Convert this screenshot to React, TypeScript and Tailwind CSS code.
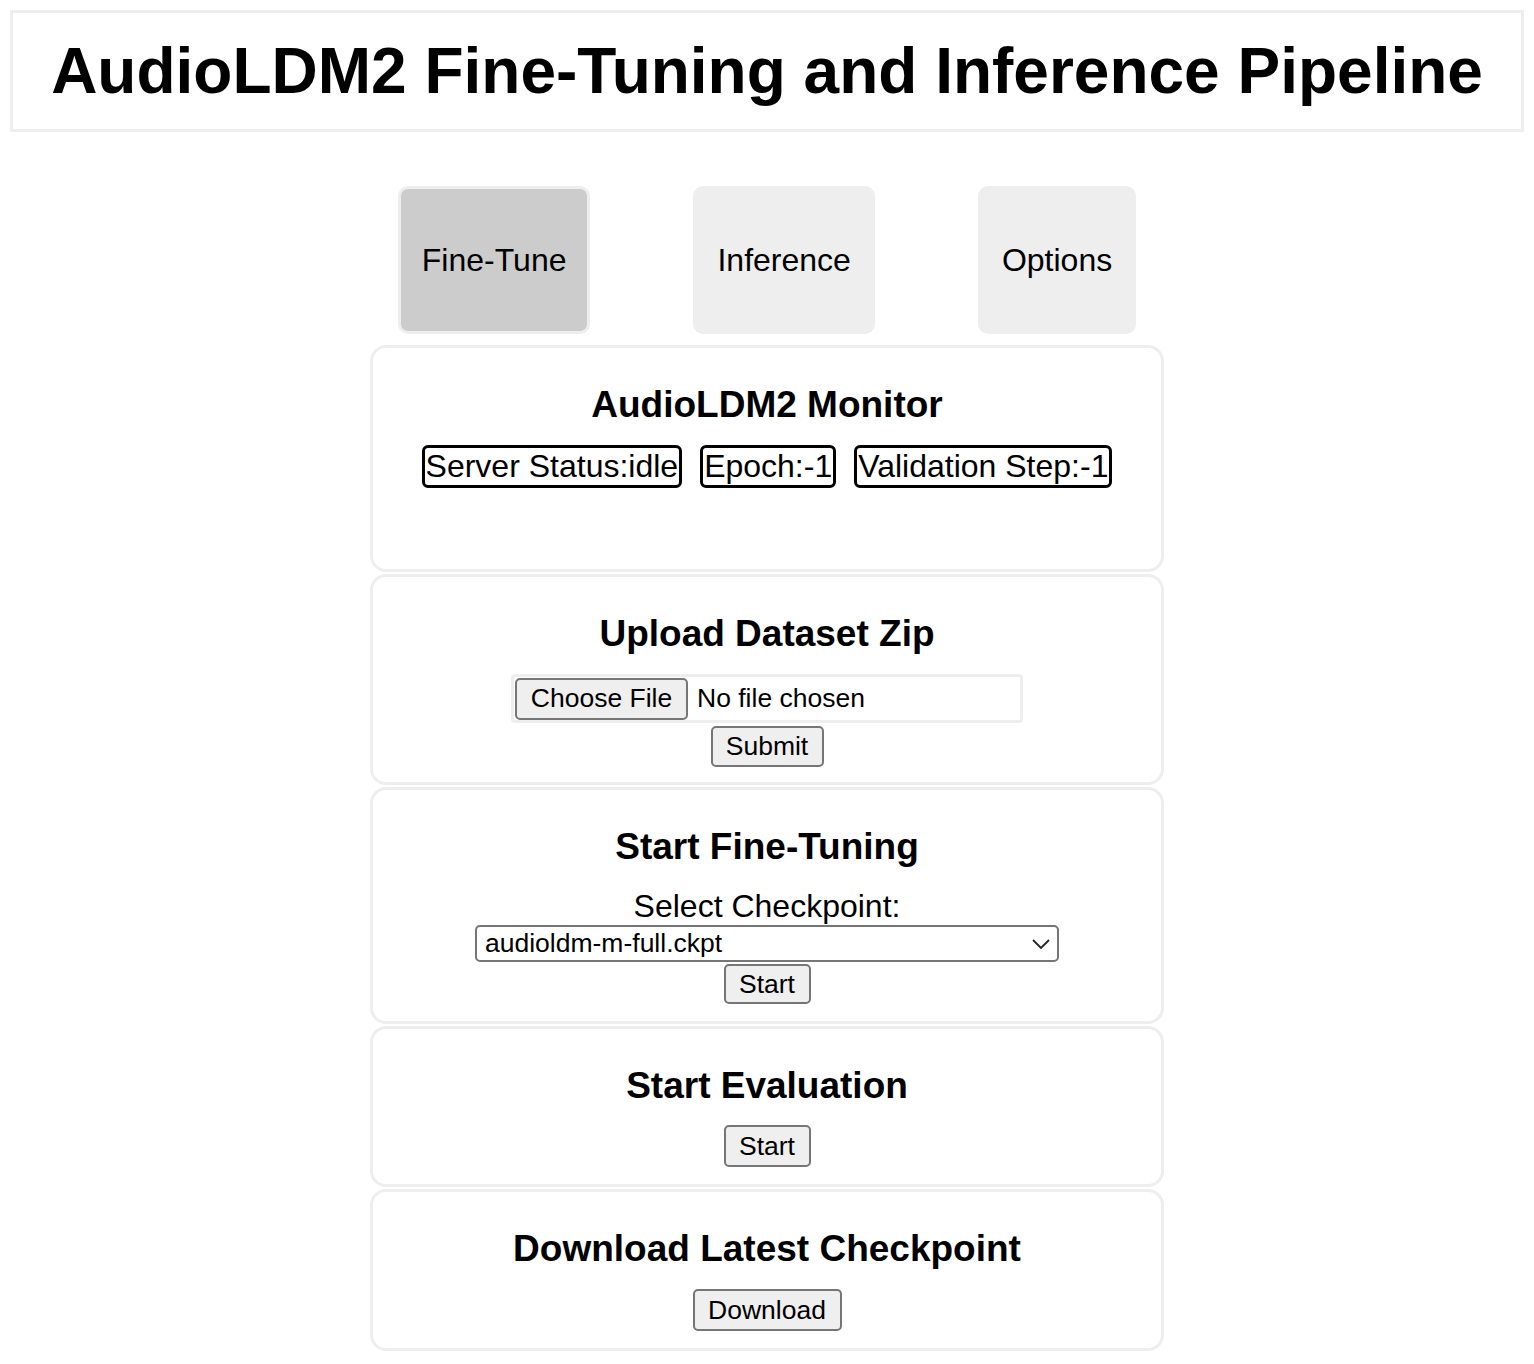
import React from 'react';

const btn =
  'flex items-center justify-center bg-[#efefef] border-2 border-[#767676] rounded-[5px] text-[26.5px] leading-none text-black';

const Card: React.FC<{ title: string; className?: string; children?: React.ReactNode }> = ({
  title,
  className,
  children,
}) => (
  <div className={`flex flex-col items-center border-[3px] border-[#eee] rounded-[16px] pt-[35px] ${className ?? ''}`}>
    <h3 className="text-[37px] leading-[43px] font-bold">{title}</h3>
    {children}
  </div>
);

const App: React.FC = () => {
  return (
    <div className="min-h-[1364px] bg-white text-black font-['Liberation_Sans',Arial,sans-serif] pt-[10px]">
      {/* header */}
      <div className="mx-[10px] h-[122px] border-[3px] border-[#eee] flex items-center justify-center">
        <h1 className="text-[64px] leading-none font-bold">AudioLDM2 Fine-Tuning and Inference Pipeline</h1>
      </div>

      {/* tabs */}
      <div className="mt-[54px] flex justify-center gap-[103px]">
        <button className="h-[148px] px-[21px] text-[32px] rounded-[10px] border-[3px] border-[#eee] bg-[#ccc]">
          Fine-Tune
        </button>
        <button className="h-[148px] px-[21px] text-[32px] rounded-[10px] border-[3px] border-[#eee] bg-[#eee]">
          Inference
        </button>
        <button className="h-[148px] px-[21px] text-[32px] rounded-[10px] border-[3px] border-[#eee] bg-[#eee]">
          Options
        </button>
      </div>

      <div className="mt-[11px] w-[794px] mx-auto flex flex-col gap-[2px]">
        <Card title="AudioLDM2 Monitor" className="pb-[81px]">
          <div className="mt-[19px] flex gap-[18px] text-[32px] leading-[37px]">
            <span className="border-[3px] border-black rounded-[6px] px-[1px]">Server Status:idle</span>
            <span className="border-[3px] border-black rounded-[6px] px-[1px]">Epoch:-1</span>
            <span className="border-[3px] border-black rounded-[6px] px-[1px]">Validation Step:-1</span>
          </div>
        </Card>

        <Card title="Upload Dataset Zip" className="pb-[15px]">
          <div className="mt-[19px] w-[512px] h-[49px] border-[3px] border-[#eee] rounded-[4px] flex items-center pl-[1px]">
            <button className={`${btn} h-[42px] w-[173px]`}>Choose File</button>
            <span className="ml-[9px] text-[26.5px] leading-none">No file chosen</span>
          </div>
          <button className={`${btn} mt-[3px] h-[41px] w-[113px]`}>Submit</button>
        </Card>

        <Card title="Start Fine-Tuning" className="pb-[17px]">
          <label className="mt-[20px] text-[32px] leading-[37px]">Select Checkpoint:</label>
          <div className="w-[584px] h-[37px] border-2 border-[#767676] rounded-[5px] flex items-center justify-between pl-[8px] pr-[6px]">
            <span className="text-[26.5px] leading-none">audioldm-m-full.ckpt</span>
            <svg width="20" height="12" viewBox="0 0 20 12" fill="none">
              <path d="M2 2l8 8 8-8" stroke="#222" strokeWidth="1.8" />
            </svg>
          </div>
          <button className={`${btn} mt-[2px] h-[40px] w-[87px]`}>Start</button>
        </Card>

        <Card title="Start Evaluation" className="pb-[17px]">
          <button className={`${btn} mt-[18px] h-[42px] w-[87px]`}>Start</button>
        </Card>

        <Card title="Download Latest Checkpoint" className="pb-[17px]">
          <button className={`${btn} mt-[19px] h-[42px] w-[149px]`}>Download</button>
        </Card>
      </div>
    </div>
  );
};

export default App;
